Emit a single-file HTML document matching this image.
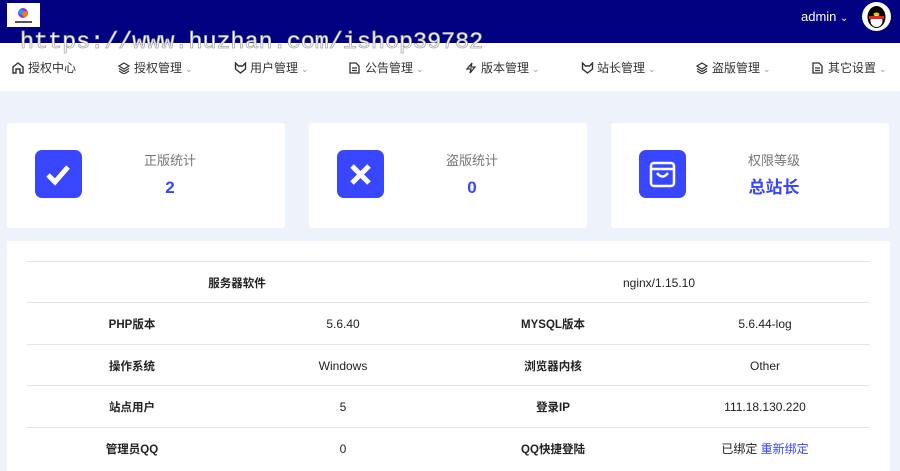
<!DOCTYPE html>
<html><head><meta charset="utf-8"><style>
*{margin:0;padding:0;box-sizing:border-box}
body{width:900px;height:458px;overflow:hidden;background:#eef2fa;font-family:"Liberation Sans","Noto Sans CJK SC",sans-serif;position:relative}
.hdr{position:absolute;left:0;top:0;width:900px;height:43px;background:#000080}
.logo{position:absolute;left:7px;top:3px;width:33px;height:24px;background:#fff}
.admin{position:absolute;left:801px;top:9px;color:#fff;font-size:13px;line-height:16px}
.av{position:absolute;left:862px;top:2px;width:29px;height:29px;border-radius:50%;background:#fff;overflow:hidden}
.nav{position:absolute;left:0;top:43px;width:900px;height:48px;background:#fff}
.wm{position:absolute;left:20px;top:29px;font-family:"Liberation Mono",monospace;font-size:23.4px;line-height:28px;color:#fff;-webkit-text-stroke:0.8px #aaa;white-space:nowrap}
.ni{position:absolute;top:61px;font-size:12px;line-height:14px;color:#333;white-space:nowrap}
.ni svg{position:absolute;left:-16px;top:1px}
.ni i{font-style:normal;color:#999;font-size:9px;margin-left:3px}
.card{position:absolute;top:123px;width:278px;height:105px;background:#fff;border-radius:3px}
.ic{position:absolute;left:28px;top:27px;width:47px;height:48px;background:#3846ff;border-radius:7px}
.lab{position:absolute;left:113px;width:100px;text-align:center;top:30px;line-height:16px;font-size:13px;color:#777}
.val{position:absolute;left:113px;width:100px;text-align:center;top:55px;line-height:20px;font-size:17px;color:#3846ff;font-weight:bold}
.panel{position:absolute;left:7px;top:241px;width:883px;height:230px;background:#fff}
.row{position:absolute;left:27px;width:843px;height:1px;background:#e3e4ea}
.c{position:absolute;font-size:12px;line-height:14px;color:#222;transform:translateX(-50%);white-space:nowrap}
.b{font-weight:bold;font-size:11.5px;margin-top:1px}
</style></head><body>
<div class="hdr"></div>
<div class="logo"><svg width="33" height="24"><circle cx="16" cy="10" r="5" fill="#8a3ae0"/><circle cx="18" cy="11" r="3" fill="#ff7a00"/><circle cx="14" cy="9" r="2.5" fill="#1aa0ff"/><rect x="8" y="18" width="17" height="2" fill="#555"/></svg></div>
<div class="admin">admin <span style="font-size:10px">&#8964;</span></div>
<div class="av"><svg width="29" height="29"><ellipse cx="14.5" cy="15" rx="9" ry="11" fill="#000"/><ellipse cx="14.5" cy="19" rx="6" ry="6" fill="#fff"/><rect x="7" y="14" width="15" height="3" fill="#e22"/><ellipse cx="14.5" cy="12" rx="3" ry="1.5" fill="#fb0"/></svg></div>
<div class="nav"></div>
<div class="wm">https://www.huzhan.com/ishop39782</div>

<div class="ni" style="left:28px"><svg width="12" height="12" viewBox="0 0 12 12"><path d="M1 11V5L6 1l5 4v6H8V7H4v4z" fill="none" stroke="#333" stroke-width="1.4"/></svg>授权中心</div>
<div class="ni" style="left:134px"><svg width="12" height="12" viewBox="0 0 12 12"><path d="M6 1l5 3-5 3-5-3zM1 6.5l5 3 5-3M1 9l5 3 5-3" fill="none" stroke="#333" stroke-width="1.2"/></svg>授权管理<i>⌄</i></div>
<div class="ni" style="left:250px"><svg width="13" height="12" viewBox="0 0 13 12"><path d="M1.5 1l3 3h4l3-3v6l-5 4-5-4z" fill="none" stroke="#333" stroke-width="1.4"/></svg>用户管理<i>⌄</i></div>
<div class="ni" style="left:365px"><svg width="11" height="12" viewBox="0 0 11 12"><path d="M1 1h6l3 3v7H1zM3 6h5M3 8.5h5" fill="none" stroke="#333" stroke-width="1.3"/></svg>公告管理<i>⌄</i></div>
<div class="ni" style="left:481px"><svg width="12" height="12" viewBox="0 0 12 12"><path d="M7 1L2 7h4l-1 4 5-6H6z" fill="none" stroke="#333" stroke-width="1.3"/></svg>版本管理<i>⌄</i></div>
<div class="ni" style="left:597px"><svg width="13" height="12" viewBox="0 0 13 12"><path d="M1.5 1l3 3h4l3-3v6l-5 4-5-4z" fill="none" stroke="#333" stroke-width="1.4"/></svg>站长管理<i>⌄</i></div>
<div class="ni" style="left:712px"><svg width="12" height="12" viewBox="0 0 12 12"><path d="M6 1l5 3-5 3-5-3zM1 6.5l5 3 5-3M1 9l5 3 5-3" fill="none" stroke="#333" stroke-width="1.2"/></svg>盗版管理<i>⌄</i></div>
<div class="ni" style="left:828px"><svg width="11" height="12" viewBox="0 0 11 12"><path d="M1 1h6l3 3v7H1zM3 6h5M3 8.5h5" fill="none" stroke="#333" stroke-width="1.3"/></svg>其它设置<i>⌄</i></div>

<div class="card" style="left:7px"><div class="ic"><svg width="47" height="48"><path d="M13 25l7 7 13-15" fill="none" stroke="#fff" stroke-width="5"/></svg></div><div class="lab">正版统计</div><div class="val">2</div></div>
<div class="card" style="left:309px"><div class="ic"><svg width="47" height="48"><path d="M15 16l17 17M32 16L15 33" fill="none" stroke="#fff" stroke-width="5"/></svg></div><div class="lab">盗版统计</div><div class="val">0</div></div>
<div class="card" style="left:611px"><div class="ic"><svg width="47" height="48"><rect x="12" y="13" width="23" height="23" rx="3" fill="none" stroke="#fff" stroke-width="2.5"/><path d="M12 19h23M18 23q5.5 7 11 0" fill="none" stroke="#fff" stroke-width="2.5"/></svg></div><div class="lab">权限等级</div><div class="val">总站长</div></div>

<div class="panel"></div>
<div class="row" style="top:261px"></div>
<div class="row" style="top:302px"></div>
<div class="row" style="top:344px"></div>
<div class="row" style="top:385px"></div>
<div class="row" style="top:427px"></div>
<div class="c b" style="left:237px;top:276px">服务器软件</div><div class="c" style="left:659px;top:276px">nginx/1.15.10</div>
<div class="c b" style="left:132px;top:317px">PHP版本</div><div class="c" style="left:343px;top:317px">5.6.40</div><div class="c b" style="left:553px;top:317px">MYSQL版本</div><div class="c" style="left:765px;top:317px">5.6.44-log</div>
<div class="c b" style="left:132px;top:359px">操作系统</div><div class="c" style="left:343px;top:359px">Windows</div><div class="c b" style="left:553px;top:359px">浏览器内核</div><div class="c" style="left:765px;top:359px">Other</div>
<div class="c b" style="left:132px;top:400px">站点用户</div><div class="c" style="left:343px;top:400px">5</div><div class="c b" style="left:553px;top:400px">登录IP</div><div class="c" style="left:765px;top:400px">111.18.130.220</div>
<div class="c b" style="left:132px;top:442px">管理员QQ</div><div class="c" style="left:343px;top:442px">0</div><div class="c b" style="left:553px;top:442px">QQ快捷登陆</div><div class="c" style="left:765px;top:442px">已绑定 <span style="color:#3846ff">重新绑定</span></div>
</body></html>
